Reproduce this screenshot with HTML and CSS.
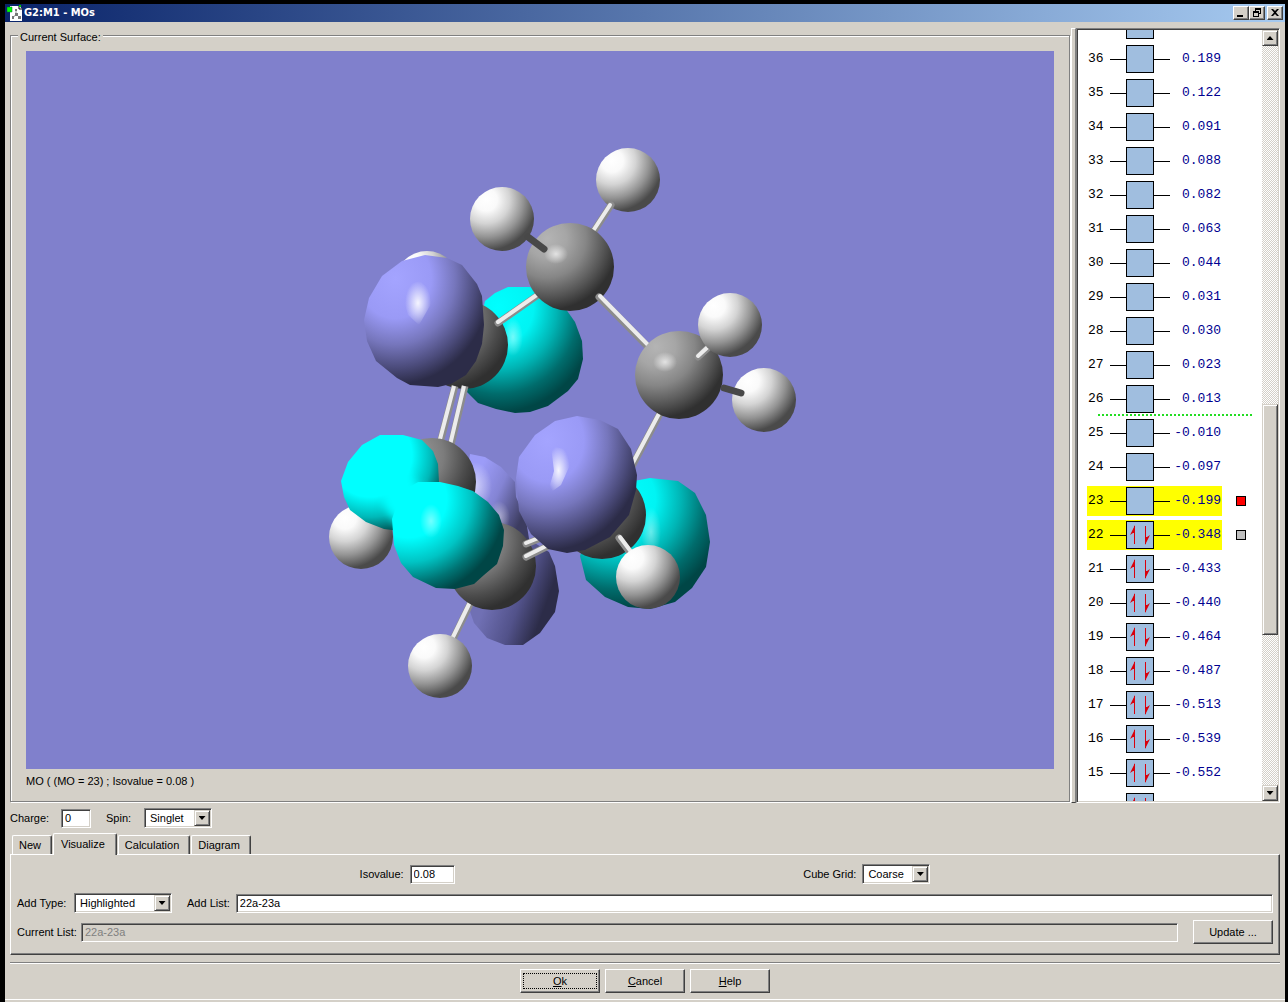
FILE: index.html
```html
<!DOCTYPE html>
<html lang="en">
<head>
<meta charset="utf-8">
<title>G2:M1 - MOs</title>
<link rel="stylesheet" href="styles.css">
</head>
<body>
<div class="window">
  <header class="titlebar">
    <svg class="app-icon" viewBox="0 0 16 16" aria-hidden="true">
      <path d="M3 1h9l3 3v12H3z" fill="#fff"/>
      <path d="M12 1v3h3" fill="#fff" stroke="#000"/>
      <path d="M9 5v4M9 9l-3 4M9 9l4 4" stroke="#999" fill="none"/>
      <path d="M8 4h2v2H8zM8 8h3v3H8zM5 11h2v3H5zM11 11h3v3h-3z" fill="#777"/>
      <path d="M0 2h5v5H0z" fill="#0f0" stroke="#063" stroke-width=".5"/>
      <path d="M12 0h2v2h-2z" fill="#0c0"/>
    </svg>
    <h1 class="title">G2:M1 - MOs</h1>
    <div class="window-buttons">
      <button class="window-button" aria-label="Minimize"><svg viewBox="0 0 12 10"><path d="M2 7h6v2H2z"/></svg></button>
      <button class="window-button" aria-label="Restore"><svg viewBox="0 0 12 10"><path d="M4 0h6v6H8V5h1V2H5v1H4zM2 3h6v6H2zM3 5v3h4V5z" fill-rule="evenodd"/></svg></button>
      <button class="window-button close" aria-label="Close"><svg viewBox="0 0 12 10"><path d="M2 1h2l2 2 2-2h2L7 4.500 10 8H8L6 6 4 8H2l3-3.500z"/></svg></button>
    </div>
  </header>

  <main class="workspace">
    <fieldset class="surface">
      <legend>Current Surface:</legend>
      <div class="surface-body">
        <svg class="scene" viewBox="26 51 1028 718" preserveAspectRatio="xMidYMid slice" role="img" aria-label="Molecular orbital surface">
          <defs>
            <radialGradient id="hydrogen" cx=".25" cy=".2" r=".88">
              <stop offset="0" stop-color="#fff"/><stop offset=".2" stop-color="#fafafa"/><stop offset=".42" stop-color="#d4d4d4"/><stop offset=".66" stop-color="#949494"/><stop offset=".9" stop-color="#4a4a4a"/>
            </radialGradient>
            <radialGradient id="carbon" cx=".24" cy=".18" r=".88">
              <stop offset="0" stop-color="#b4b4b4"/><stop offset=".25" stop-color="#a6a6a6"/><stop offset=".5" stop-color="#868686"/><stop offset=".75" stop-color="#545454"/><stop offset=".92" stop-color="#303030"/>
            </radialGradient>
            <radialGradient id="carbon-shade" cx=".25" cy=".2" r=".85">
              <stop offset="0" stop-color="#a0a0a0"/><stop offset=".45" stop-color="#7c7c7c"/><stop offset=".75" stop-color="#4c4c4c"/><stop offset=".95" stop-color="#303030"/>
            </radialGradient>
            <radialGradient id="violet" cx=".26" cy=".18" r=".86">
              <stop offset="0" stop-color="#a4a4ff"/><stop offset=".35" stop-color="#9a9af6"/><stop offset=".58" stop-color="#7676bc"/><stop offset=".78" stop-color="#4c4c7c"/><stop offset=".93" stop-color="#2c2c48"/>
            </radialGradient>
            <linearGradient id="violet-upper" gradientUnits="userSpaceOnUse" x1="475" y1="480" x2="528" y2="505">
              <stop offset="0" stop-color="#9c9cf8"/><stop offset=".45" stop-color="#8484d4"/><stop offset="1" stop-color="#3c3c60"/>
            </linearGradient>
            <linearGradient id="violet-lower" gradientUnits="userSpaceOnUse" x1="490" y1="590" x2="550" y2="612">
              <stop offset="0" stop-color="#7070b4"/><stop offset=".5" stop-color="#52528a"/><stop offset=".9" stop-color="#2c2c48"/>
            </linearGradient>
            <radialGradient id="cyan" cx=".28" cy=".16" r=".86">
              <stop offset="0" stop-color="#0ff"/><stop offset=".35" stop-color="#00f4f4"/><stop offset=".58" stop-color="#00b4b4"/><stop offset=".8" stop-color="#006c6c"/><stop offset=".97" stop-color="#004646"/>
            </radialGradient>
            <radialGradient id="cyan-upper" gradientUnits="userSpaceOnUse" cx="370" cy="455" r="84">
              <stop offset=".5" stop-color="#0ff"/><stop offset=".74" stop-color="#00b8b8"/><stop offset=".92" stop-color="#005858"/>
            </radialGradient>
            <radialGradient id="cyan-lower" gradientUnits="userSpaceOnUse" cx="408" cy="499" r="102">
              <stop offset=".38" stop-color="#0ff"/><stop offset=".62" stop-color="#00c4c4"/><stop offset=".82" stop-color="#007474"/><stop offset=".96" stop-color="#004646"/>
            </radialGradient>
            <radialGradient id="glint">
              <stop offset="0" stop-color="#fff" stop-opacity=".9"/><stop offset=".45" stop-color="#fff" stop-opacity=".5"/><stop offset="1" stop-color="#fff" stop-opacity="0"/>
            </radialGradient>
            <g id="h"><circle r="32" fill="url(#hydrogen)"/></g>
            <g id="c"><circle r="44" fill="url(#carbon)"/><ellipse cx="-14" cy="-13" rx="12" ry="10" fill="url(#glint)" opacity=".75"/></g>
            <g id="c-dark"><circle r="44" fill="url(#carbon-shade)"/></g>
          </defs>
          <rect x="26" y="51" width="1028" height="718" fill="#8080cc"/>

          <!-- rear lobes and atoms -->
          <use href="#h" x="427" y="283"/>
          <path d="M485 301L495 293 508 287H530L548 293 563 305 575 322 582 341 583 359 578 379 568 391 548 406 530 412 515 413 496 409 478 403 465 390Z" fill="url(#cyan)"/>
          <ellipse cx="513" cy="337" rx="10" ry="19" fill="url(#glint)" opacity=".5"/>
          <use href="#c-dark" x="464" y="345"/>
          <g class="bond"><path d="M455 386L440 443M465 386L451 445"/></g>
          <g class="bond-core"><path d="M454 386L439 443M464 386L450 445"/></g>
          <path class="bond" d="M498 323L538 295"/><path class="bond-core" d="M498 322L538 294"/>
          <use href="#h" x="628" y="180"/>
          <path class="bond" d="M611 205L592 234"/><path class="bond-core" d="M610 205L591 234"/>
          <use href="#c" x="570" y="267"/>
          <use href="#h" x="502" y="219"/>
          <path class="bond-dark" d="M528 237L544 249"/>
          <path class="bond" d="M599 297L650 349"/><path class="bond-core" d="M600 296L650 347"/>
          <path class="bond" d="M663 408L630 470"/><path class="bond-core" d="M662 408L629 470"/>
          <use href="#c" x="679" y="375"/>
          <path class="bond" d="M698 357L710 346"/><path class="bond-core" d="M698 356L710 345"/>
          <use href="#h" x="730" y="325"/>
          <use href="#h" x="764" y="400"/>
          <path class="bond-dark" d="M724 388L741 393"/>

          <!-- upper left lobe -->
          <path d="M364 320L369 298 382 276 402 261 425 255 447 258 462 265 477 284 482 296 484 325 482 344 476 361 466 375 451 384 438 387 410 385 397 378 376 361 367 341Z" fill="url(#violet)"/>
          <path d="M407 285L420 281 430 290 431 304 419 325 408 315 405 305Z" fill="url(#glint)"/>

          <!-- lower ring -->
          <path d="M530 540L549 552 555 566 559 591 555 612 540 633 523 645 505 645 487 638 474 623 466 600 480 550Z" fill="url(#violet-lower)"/>
          <path d="M470 454L485 457 501 467 515 482 516 497 526 520 530 545 490 550 455 540Z" fill="url(#violet-upper)"/>
          <ellipse cx="475" cy="486" rx="17" ry="24" fill="url(#glint)" opacity=".6"/>
          <ellipse cx="499" cy="517" rx="11" ry="16" fill="url(#glint)" opacity=".5"/>
          <use href="#c-dark" x="432" y="482"/>
          <path class="bond" d="M474 596L453 639"/><path class="bond-core" d="M473 596L452 639"/>
          <use href="#h" x="440" y="666"/>
          <use href="#c-dark" x="492" y="566"/>
          <path class="bond" d="M526 544L556 532M526 557L560 540"/><path class="bond-core" d="M526 543L556 531M526 556L560 539"/>
          <path d="M634 481L650 478 678 481 695 493 706 515 710 542 706 567 692 588 675 602 650 609 628 607 605 597 586 580 580 556 590 530Z" fill="url(#cyan)"/>
          <ellipse cx="651" cy="532" rx="10" ry="25" fill="url(#glint)" opacity=".45"/>
          <use href="#c-dark" x="602" y="515"/>
          <path d="M516 478L519 457 535 435 555 421 577 416 600 420 618 429 631 449 637 475 636 490 629 515 610 537 585 550 567 553 548 549 531 534 519 511Z" fill="url(#violet)"/>
          <path d="M551 446L568 450 570 465 561 485 547 495 554 471Z" fill="url(#glint)"/>
          <path class="bond" d="M619 538L634 558"/><path class="bond-core" d="M620 537L635 557"/>
          <use href="#h" x="648" y="577"/>

          <!-- front lobe pair -->
          <use href="#h" x="361" y="537"/>
          <path d="M341 481L348 462 362 445 380 435 403 435 422 440 433 451 438 464 439 482 450 500 420 545 392 530 384 529 366 522 350 510 344 497Z" fill="url(#cyan-upper)"/>
          <path d="M392 519L397 505 404 490 418 482H440L458 486 473 491 488 502 499 515 504 530 503 546 497 564 484 575 474 584 455 589 436 588 413 577 401 563 394 545Z" fill="url(#cyan-lower)"/>
          <path d="M380 462L402 462 416 484 434 492 414 530 399 528 384 506Z" fill="#0ff" class="blend"/>
          <ellipse cx="431" cy="521" rx="11" ry="17" fill="url(#glint)" opacity=".5"/>
        </svg>
        <p class="caption">MO ( (MO = 23) ; Isovalue = 0.08 )</p>
      </div>
    </fieldset>

    <div class="splitter" role="separator" aria-orientation="vertical"></div>

    <section class="levels" aria-label="Orbital energies">
      <ol class="level-list" id="level-list"></ol>
      <div class="scrollbar" aria-hidden="true">
        <span class="arrow-button"><i class="up"></i></span>
        <span class="track-before"></span>
        <span class="thumb"></span>
        <span class="track-after"></span>
        <span class="arrow-button"><i class="down"></i></span>
      </div>
    </section>
  </main>

  <div class="row molecule">
    <label class="charge-label" for="charge">Charge:</label>
    <input class="field charge" id="charge" value="0">
    <label class="spin-label" for="spin">Spin:</label>
    <span class="combo short"><select id="spin"><option>Singlet</option></select><span class="arrow-button"><i class="down"></i></span></span>
  </div>

  <div class="tabs" role="tablist">
    <button class="tab" role="tab">New</button>
    <button class="tab active" role="tab" aria-selected="true">Visualize</button>
    <button class="tab" role="tab">Calculation</button>
    <button class="tab" role="tab">Diagram</button>
  </div>
  <section class="panel" role="tabpanel">
    <div class="row spread">
      <div class="row">
        <label for="isovalue">Isovalue:</label>
        <input class="field isovalue" id="isovalue" value="0.08">
      </div>
      <div class="row">
        <label for="grid">Cube Grid:</label>
        <span class="combo short"><select id="grid"><option>Coarse</option></select><span class="arrow-button"><i class="down"></i></span></span>
      </div>
    </div>
    <div class="row">
      <label class="type-label" for="type">Add Type:</label>
      <span class="combo long"><select id="type"><option>Highlighted</option></select><span class="arrow-button"><i class="down"></i></span></span>
      <label class="add-list" for="list">Add List:</label>
      <input class="field fill" id="list" value="22a-23a">
    </div>
    <div class="row current">
      <label for="current">Current List:</label>
      <input class="field fill" id="current" value="22a-23a" disabled>
      <button class="button update">Update ...</button>
    </div>
  </section>

  <footer class="actions">
    <button class="button default"><span><u>O</u>k</span></button>
    <button class="button"><u>C</u>ancel</button>
    <button class="button"><u>H</u>elp</button>
  </footer>
</div>
<script src="levels.js"></script>
</body>
</html>
```
FILE: styles.css
```css
* { box-sizing: border-box; }

body {
  margin: 0;
  padding: 4px 3px 0 5px;
  height: 100vh;
  min-height: 600px;
  background: #000;
  color: #000;
  font: 11px/14px "Liberation Sans", Arial, sans-serif;
}

button, input, select { font: inherit; color: inherit; margin: 0; border-radius: 0; }
label { white-space: nowrap; }

.window {
  display: flex;
  flex-direction: column;
  height: 100%;
  background: #d4d0c8;
  border-bottom: 2px solid #d4d0c8;
  box-shadow: inset 0 -1px #fff;
}

.titlebar {
  display: flex;
  align-items: center;
  height: 18px;
  padding: 0 2px;
  background: linear-gradient(90deg, #0a246a, #a6caf0);
}
.app-icon { width: 16px; height: 16px; }
.title {
  flex: 1;
  margin: 0 0 0 1px;
  color: #fff;
  font: bold 11px/14px "DejaVu Sans Condensed", Tahoma, sans-serif;
}
.window-buttons { display: flex; }
.window-button {
  width: 16px;
  height: 14px;
  padding: 0;
  border: 1px solid;
  border-color: #fff #404040 #404040 #fff;
  background: #d4d0c8;
  box-shadow: inset -1px -1px #808080;
}
.window-button svg { display: block; width: 12px; height: 10px; margin: auto; }
.window-button.close { margin-left: 2px; }

.workspace {
  flex: 1;
  display: flex;
  min-height: 0;
  padding: 6px 5px 0;
}

.surface {
  flex: 1;
  display: flex;
  min-width: 0;
  margin: -1px 1px 1px 0;
  padding: 0 15px;
  border: 1px solid #808080;
  box-shadow: 1px 1px #fff, inset 1px 1px #fff;
}
.surface legend {
  margin-left: -8px;
  padding: 4px 2px 0;
  background: #d4d0c8;
  line-height: 12px;
}
.surface-body {
  flex: 1;
  display: flex;
  flex-direction: column;
  height: 100%;
  min-width: 0;
  padding-top: 8px;
}
.scene { flex: 1; display: block; width: 100%; min-height: 0; background: #8080cc; }
.caption { margin: 5px 0 13px; }

.bond { fill: none; stroke: #8c8c8c; stroke-width: 7; stroke-linecap: round; }
.bond path { stroke-linecap: butt; }
.bond-core { fill: none; stroke: #ececec; stroke-width: 4; stroke-linecap: round; }
.bond-core path { stroke-linecap: butt; }
.bond-dark { fill: none; stroke: #484848; stroke-width: 7; stroke-linecap: round; }
.blend { filter: blur(4px); }

.splitter {
  width: 5px;
  border: 1px solid;
  border-color: #fff #808080 #404040 #fff;
}

.levels {
  display: flex;
  width: 204px;
  border: 1px solid;
  border-color: #808080 #fff #fff #808080;
  padding: 1px;
  background: #fff;
  box-shadow: inset 1px 1px #404040, inset -1px -1px #d4d0c8;
}
.level-list {
  flex: 1;
  margin: 0;
  padding: 0 0 0 9px;
  overflow: hidden;
  list-style: none;
  font: 13px/16px "Liberation Mono", "Courier New", monospace;
}
.level-item { position: relative; display: flex; align-items: center; height: 34px; }
/* The list opens scrolled part of the way past its first row. */
.level-item:first-child { margin-top: -22px; }
.level { display: flex; align-items: center; width: 135px; height: 30px; }
.level.highlighted { background: #ff0; }
.number { width: 23px; padding-left: 1px; }
.wire { width: 16px; height: 1px; background: #000; }
.orbital { width: 28px; height: 28px; border: 1px solid #000; background: #a0bedf; }
.orbital svg { display: block; width: 26px; height: 26px; }
.energy { flex: 1; padding-right: 1px; text-align: right; color: #000090; }
.swatch { width: 10px; height: 10px; margin-left: 14px; border: 1px solid #000; }
.swatch.red { background: #f00; }
.swatch.gray { background: #c0c0c0; }
.zero::after {
  content: "";
  position: absolute;
  left: 11px;
  bottom: 0;
  width: 155px;
  height: 2px;
  background: repeating-linear-gradient(90deg, #2d2 0 2px, transparent 2px 4px);
}

.scrollbar {
  display: flex;
  flex-direction: column;
  width: 16px;
  background: repeating-conic-gradient(#d4d0c8 0 25%, #fff 0 50%) 0 0 / 2px 2px;
}
.track-before { flex: 359; }
.thumb { flex: 230; }
.track-after { flex: 150; }
.thumb, .arrow-button {
  background: #d4d0c8;
  border: 1px solid;
  border-color: #d4d0c8 #404040 #404040 #d4d0c8;
  box-shadow: inset 1px 1px #fff, inset -1px -1px #808080;
}
.arrow-button { display: grid; place-items: center; width: 16px; height: 16px; }
.up, .down { width: 7px; height: 4px; background: #000; }
.up { clip-path: polygon(50% 0, 100% 100%, 0 100%); }
.down { clip-path: polygon(0 0, 100% 0, 50% 100%); }

.row { display: flex; align-items: center; gap: 6px; height: 20px; }
.field {
  height: 19px;
  padding: 0 3px;
  border: 1px solid;
  border-color: #808080 #fff #fff #808080;
  background: #fff;
  box-shadow: inset 1px 1px #404040, inset -1px -1px #d4d0c8;
  outline: 0;
}
.field:disabled { background: #d4d0c8; color: #808080; }
.fill { flex: 1; min-width: 0; }
.combo {
  display: flex;
  align-items: center;
  height: 20px;
  padding: 1px 1px 1px 5px;
  border: 1px solid;
  border-color: #808080 #fff #fff #808080;
  background: #fff;
  box-shadow: inset 1px 1px #404040, inset -1px -1px #d4d0c8;
}
.combo select {
  flex: 1;
  min-width: 0;
  padding: 0;
  border: 0;
  background: transparent;
  appearance: none;
}
.short { width: 68px; }
.long { width: 98px; }

.molecule { margin: 5px; gap: 0; }
.charge-label { width: 51px; }
.charge { width: 30px; }
.spin-label { width: 38px; margin-left: 15px; }
.isovalue { width: 45px; }

.tabs { display: flex; align-items: flex-end; height: 21px; margin: 0 7px; }
.tab {
  height: 19px;
  margin-left: 1px;
  padding: 0 10px 0 6px;
  border: 1px solid;
  border-color: #fff #404040 transparent #fff;
  border-bottom: 0;
  border-radius: 2px 2px 0 0;
  background: #d4d0c8;
  box-shadow: inset -1px 0 #808080;
}
.tab:first-child { margin-left: 0; }
.tab.active { height: 22px; margin-bottom: -1px; padding: 0 11px 2px 7px; z-index: 1; }

.panel {
  display: flex;
  flex-direction: column;
  gap: 9px;
  margin: 0 5px;
  padding: 9px 6px 12px;
  border: 1px solid;
  border-color: #fff #404040 #404040 #fff;
  box-shadow: inset -1px -1px #808080;
}
.spread { justify-content: space-evenly; }
.type-label { min-width: 51px; }
.add-list { margin-left: 9px; }
.current { gap: 4px; }
.update { margin-left: 11px; }

.button {
  width: 80px;
  height: 24px;
  padding: 0;
  border: 1px solid;
  border-color: #fff #404040 #404040 #fff;
  background: #d4d0c8;
  box-shadow: inset -1px -1px #808080;
}
.button.default span {
  display: block;
  margin: 0 3px;
  outline: 1px dotted #000;
  line-height: 14px;
}

.actions {
  display: flex;
  justify-content: center;
  gap: 5px;
  margin: 7px 5px 0;
  padding: 6px 0 7px;
  border-top: 1px solid #808080;
  box-shadow: inset 0 1px #fff;
}
```
FILE: levels.js
```js
const energies = [
  [37, ""], [36, "0.189"], [35, "0.122"], [34, "0.091"], [33, "0.088"], [32, "0.082"],
  [31, "0.063"], [30, "0.044"], [29, "0.031"], [28, "0.030"], [27, "0.023"], [26, "0.013"],
  [25, "-0.010"], [24, "-0.097"], [23, "-0.199"], [22, "-0.348"], [21, "-0.433"], [20, "-0.440"],
  [19, "-0.464"], [18, "-0.487"], [17, "-0.513"], [16, "-0.539"], [15, "-0.552"], [14, ""]
];
const swatches = { 23: "red", 22: "gray" };
const spins = '<svg viewBox="0 0 26 26"><path d="M7.500 22V4M18.500 4v18" fill="none" stroke="#d8000c"/><path d="M8 3v8H6l-3 2zM18 23v-8h2l3-2z" fill="#d8000c"/></svg>';

document.getElementById("level-list").innerHTML = energies.map(([n, energy]) => `
  <li class="level-item${n === 26 ? " zero" : ""}">
    <span class="level${swatches[n] ? " highlighted" : ""}">
      <span class="number">${energy ? n : ""}</span>
      <span class="wire"></span><span class="orbital">${n <= 22 ? spins : ""}</span><span class="wire"></span>
      <span class="energy">${energy}</span>
    </span>
    ${swatches[n] ? `<span class="swatch ${swatches[n]}"></span>` : ""}
  </li>`).join("");
```
